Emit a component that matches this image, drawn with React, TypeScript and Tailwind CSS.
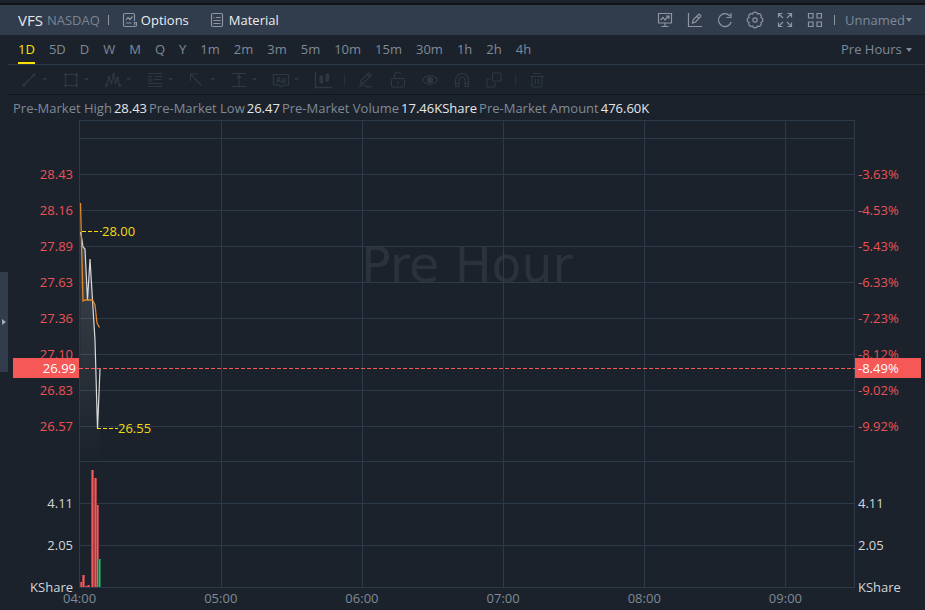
import { useState, type ReactNode } from "react";

const PERIODS = ["1D", "5D", "D", "W", "M", "Q", "Y", "1m", "2m", "3m", "5m", "10m", "15m", "30m", "1h", "2h", "4h"];

const STATS = [
  ["Pre-Market High", "28.43"],
  ["Pre-Market Low", "26.47"],
  ["Pre-Market Volume", "17.46KShare"],
  ["Pre-Market Amount", "476.60K"],
];

const PRICES = ["28.43", "28.16", "27.89", "27.63", "27.36", "27.10", "26.83", "26.57"];
const CHANGES = ["-3.63%", "-4.53%", "-5.43%", "-6.33%", "-7.23%", "-8.12%", "-9.02%", "-9.92%"];
const VOLUMES = ["4.11", "2.05", "KShare"];
const TIMES = ["04:00", "05:00", "06:00", "07:00", "08:00", "09:00"];

const ROWS = [0, 18, 54, 90, 126, 162, 198, 234, 270, 306, 341, 383, 425, 467];
const COLUMNS = [0, 142, 283, 424, 565, 706, 775];

const BARS = [
  { x: 2, top: 462, up: false },
  { x: 4, top: 455, up: false },
  { x: 7, top: 466, up: false },
  { x: 9, top: 465, up: false },
  { x: 13, top: 350, up: false },
  { x: 16, top: 358, up: false },
  { x: 18, top: 385, up: false },
  { x: 20, top: 439, up: true },
];

function Caret({ small = false }: { small?: boolean }) {
  return (
    <svg className={small ? "h-[3px] w-[5px]" : "h-[4px] w-[6px]"} viewBox="0 0 6 4" fill="currentColor" aria-hidden="true">
      <path d="M0 0h6L3 4z" />
    </svg>
  );
}

function Icon({ children }: { children: ReactNode }) {
  return (
    <svg className="size-[18px] shrink-0" viewBox="0 0 18 18" fill="none" stroke="currentColor" strokeWidth="1.2" aria-hidden="true">
      {children}
    </svg>
  );
}

const MENU_TOOLS: { name: string; icon: ReactNode }[] = [
  {
    name: "Line",
    icon: (
      <>
        <path d="M4 14 14 4" />
        <circle cx="4" cy="14" r="1.5" fill="currentColor" stroke="none" />
        <circle cx="14" cy="4" r="1.5" fill="currentColor" stroke="none" />
      </>
    ),
  },
  {
    name: "Shape",
    icon: (
      <>
        <path d="M3.5 3.5h11v11h-11z" />
        <path d="M2 3.5a1.5 1.5 0 1 1 3 0 1.5 1.5 0 0 1-3 0M13 3.5a1.5 1.5 0 1 1 3 0 1.5 1.5 0 0 1-3 0M2 14.5a1.5 1.5 0 1 1 3 0 1.5 1.5 0 0 1-3 0M13 14.5a1.5 1.5 0 1 1 3 0 1.5 1.5 0 0 1-3 0" fill="currentColor" stroke="none" />
      </>
    ),
  },
  {
    name: "Wave",
    icon: (
      <>
        <path d="m2.5 14.5 2.5-8 2.5 6L9.5 3l2 9.5L13.5 7l2.5 7.5" />
        <path d="M1 14.5a1.4 1.4 0 1 1 2.8 0 1.4 1.4 0 0 1-2.8 0M3.6 6.5a1.4 1.4 0 1 1 2.8 0 1.4 1.4 0 0 1-2.8 0M8.1 3.2a1.4 1.4 0 1 1 2.8 0 1.4 1.4 0 0 1-2.8 0M12.1 7a1.4 1.4 0 1 1 2.8 0 1.4 1.4 0 0 1-2.8 0M14.4 14.5a1.4 1.4 0 1 1 2.8 0 1.4 1.4 0 0 1-2.8 0" fill="currentColor" stroke="none" />
      </>
    ),
  },
  {
    name: "Golden section",
    icon: (
      <>
        <path d="M2 2.5h14M8 5.5h8M8 8.5h8M2 12.5h14M2 15.5h14" />
        <path d="M6 5.5H3V10h3V8H4.8" />
      </>
    ),
  },
  {
    name: "Arrow",
    icon: <path d="M13.5 14.5 3 3.5M2.5 10V3H10" />,
  },
  {
    name: "Measure",
    icon: (
      <>
        <path d="M2 2.5h14M2 15.5h14M9 4v11" />
        <path d="m9 3 2.5 4h-5z" fill="currentColor" stroke="none" />
      </>
    ),
  },
  {
    name: "Text note",
    icon: (
      <>
        <path d="M1.5 3.5h15V14H11l-2 2-2-2H1.5z" />
        <text x="9" y="11.5" textAnchor="middle" fontSize="8" fontWeight="700" fill="currentColor" stroke="none">
          Aa
        </text>
      </>
    ),
  },
];

const EDIT_TOOLS: { name: string; icon: ReactNode }[] = [
  {
    name: "Continuous drawing",
    icon: <path d="M4 9.5 11.5 2 14 4.500 6.500 12l-3 1zM10 3.500 12.500 6M2 16c3-2.500 5-2.500 6.500-1s4 1.500 6.500 0" />,
  },
  {
    name: "Lock drawings",
    icon: (
      <>
        <rect x="2.5" y="7.5" width="13" height="8.5" rx="1.5" />
        <path d="M5.5 7.5V5A3.5 3.5 0 0 1 12 3M9 10v3.5" />
      </>
    ),
  },
  {
    name: "Show drawings",
    icon: (
      <>
        <path d="M1.5 9C5 3.2 13 3.2 16.5 9 13 14.8 5 14.8 1.5 9z" />
        <circle cx="9" cy="9" r="2.6" fill="currentColor" />
      </>
    ),
  },
  {
    name: "Magnet",
    icon: <path d="M2.5 15.5V9a6.5 6.5 0 0 1 13 0v6.5H12V9a3 3 0 0 0-6 0v6.5zM2.5 12.5H6M12 12.5h3.5" />,
  },
  {
    name: "Link drawings",
    icon: (
      <>
        <rect x="7.5" y="2" width="8.5" height="8" rx="1" />
        <path d="M5.5 8H3a1 1 0 0 0-1 1v6a1 1 0 0 0 1 1h6a1 1 0 0 0 1-1v-3" />
      </>
    ),
  },
];

const HEADER_ACTIONS: { name: string; icon: ReactNode }[] = [
  {
    name: "Simulated trading",
    icon: <path d="M2.5 2.5h13V12h-13zM9 12v3M5.5 15.5h7M4.5 9 7 6.5 9 9l3.5-4M10 5h3v3" />,
  },
  {
    name: "Draw",
    icon: <path d="M2.5 2v13.5H16M6.5 12l.8-3.5L13 3l2 2-5.5 6zM10.5 5l2 2" />,
  },
  {
    name: "Refresh",
    icon: <path d="M14.2 5.2A6.5 6.5 0 1 0 15.2 11M15 2v4.5h-4.5" />,
  },
  {
    name: "Settings",
    icon: (
      <>
        <path d="M15 6.500a2.600 2.600 0 0 1 0 5 2.600 2.600 0 0 1-3.500 3.500 2.600 2.600 0 0 1-5 0A2.600 2.600 0 0 1 3 11.500a2.600 2.600 0 0 1 0-5A2.600 2.600 0 0 1 6.500 3a2.600 2.600 0 0 1 5 0A2.600 2.600 0 0 1 15 6.500z" />
        <circle cx="9" cy="9" r="2.2" />
      </>
    ),
  },
  {
    name: "Full screen",
    icon: <path d="M2.5 6.5v-4h4M2.5 2.5 7 7M11.5 2.5h4v4M15.5 2.5 11 7M2.5 11.5v4h4M2.5 15.5 7 11M11.5 15.5h4v-4M15.5 15.5 11 11" />,
  },
  {
    name: "Layout",
    icon: <path d="M2.5 2.5H7V7H2.5zM11 2.5h4.5V7H11zM2.5 11H7v4.5H2.5zM11 11h4.5v4.5H11z" />,
  },
];

function Header() {
  return (
    <header className="flex h-[30px] items-center bg-[#313c4c] pr-[13px] pl-[18px]">
      <h1 className="text-[15px] leading-5 text-[#e4e7ea]">VFS</h1>
      <span className="ml-1 text-[13px] leading-5 text-[#7b8695]">NASDAQ</span>
      <span className="mx-2 h-[10px] w-px bg-[#8c96a3]" />
      <button type="button" className="ml-[5px] flex items-center gap-[3px] text-[13px] leading-5 text-[#eceef0]">
        <svg className="size-[16px] text-[#8c96a3]" viewBox="0 0 16 16" fill="none" stroke="currentColor" strokeWidth="1.2" aria-hidden="true">
          <path d="M12.5 9V3A1.5 1.5 0 0 0 11 1.5H3A1.5 1.5 0 0 0 1.5 3v10A1.5 1.5 0 0 0 3 14.5h10a1.5 1.5 0 0 0 1.5-1.5v-2.5h-2V13M4 8l2-2.5 2 2 2.5-3M4 11h5.5" />
        </svg>
        Options
      </button>
      <button type="button" className="ml-5 flex items-center gap-[4px] text-[13px] leading-5 text-[#eceef0]">
        <svg className="size-[16px] text-[#8c96a3]" viewBox="0 0 16 16" fill="none" stroke="currentColor" strokeWidth="1.2" aria-hidden="true">
          <rect x="2.5" y="1.5" width="11" height="13" rx="1.5" />
          <path d="M4.500 5.500h1M7 5.500h4.500M4.500 8.500h7M4.500 11.500h7" />
        </svg>
        Material
      </button>
      <div className="ml-auto flex items-center">
        {HEADER_ACTIONS.map((action) => (
          <button key={action.name} type="button" aria-label={action.name} className="flex w-[30px] justify-center text-[#8c96a3]">
            <Icon>{action.icon}</Icon>
          </button>
        ))}
        <span className="mr-[10px] ml-1 h-[10px] w-px bg-[#8c96a3]" />
        <label className="flex items-center gap-px text-[13px] leading-5 text-[#7f8a98]">
          <select aria-label="Layout name" className="appearance-none bg-transparent outline-none">
            <option>Unnamed</option>
          </select>
          <Caret />
        </label>
      </div>
    </header>
  );
}

function PeriodBar() {
  const [period, setPeriod] = useState("1D");
  return (
    <nav className="flex h-[30px] justify-between border-b border-[#2d3a49] pr-[13px] pl-[10px] text-[13px]">
      <div className="flex gap-[14px]">
        {PERIODS.map((p) => (
          <button
            key={p}
            type="button"
            onClick={() => setPeriod(p)}
            className={
              p === period
                ? "border-b-2 border-[#ffe100] leading-[28px] text-[#ffe100]"
                : "border-b-2 border-transparent leading-[28px] text-[#7f8a98]"
            }
          >
            {p}
          </button>
        ))}
      </div>
      <label className="flex items-center gap-1 pt-px text-[#7f8a98]">
        <select aria-label="Session" className="appearance-none bg-transparent outline-none">
          <option>Pre Hours</option>
        </select>
        <Caret />
      </label>
    </nav>
  );
}

function DrawingBar() {
  return (
    <div role="toolbar" aria-label="Drawing tools" className="flex h-[30px] items-center border-b border-[#11161b] pl-3 text-[#2e3742]">
      {MENU_TOOLS.map((tool) => (
        <button key={tool.name} type="button" aria-label={tool.name} className="flex w-[42px] items-center gap-[4px]">
          <Icon>{tool.icon}</Icon>
          <Caret small />
        </button>
      ))}
      <button type="button" aria-label="Candles">
        <Icon>
          <path d="M1.5 1v15.5H18" strokeWidth="1.5" />
          <path d="M6 5.5h2.5v6H6zM12 3.5h2.5v6H12zM7.2 4v9M13.2 2v9" />
        </Icon>
      </button>
      <span className="mr-[5px] ml-3 h-3 w-px bg-[#252d37]" />
      {EDIT_TOOLS.map((tool) => (
        <button key={tool.name} type="button" aria-label={tool.name} className="flex w-8 justify-center">
          <Icon>{tool.icon}</Icon>
        </button>
      ))}
      <span className="mx-[5px] h-3 w-px bg-[#252d37]" />
      <button type="button" aria-label="Delete drawings" className="flex w-8 justify-center">
        <Icon>
          <path d="M5 2.5h8M2 5.5h14M4 5.5v9A1.5 1.5 0 0 0 5.5 16h7a1.5 1.5 0 0 0 1.5-1.5v-9M7.5 8v5M10.5 8v5" />
        </Icon>
      </button>
    </div>
  );
}

function Plot() {
  return (
    <div className="relative h-[468px] min-w-0 flex-1">
      <p className="absolute inset-x-0 top-[116px] text-center font-['DejaVu_Sans'] text-[49px] leading-[60px] text-[#2b323c]">Pre Hour</p>
      <svg className="relative block h-[468px] w-full" viewBox="0 0 776 468" preserveAspectRatio="none" fill="none" role="img" aria-label="Pre-market price and volume">
        <defs>
          <linearGradient id="area" x1="0" y1="0" x2="0" y2="1">
            <stop offset="0" stopColor="#ffffff" stopOpacity="0.16" />
            <stop offset="1" stopColor="#ffffff" stopOpacity="0" />
          </linearGradient>
        </defs>
        {ROWS.map((y) => (
          <rect key={y} x="0" y={y} width="776" height="1" fill="#2d3a49" />
        ))}
        {COLUMNS.map((x) => (
          <rect key={x} x={x} y="0" width="1" height="468" fill="#2d3a49" />
        ))}
        <path d="M1.5 112 4 127l2 1 2.500 52 2.500-41 2.500 41 2.500 40 2.500 89 2.500-60v92h-20z" fill="url(#area)" />
        <path d="M1.5 112 3 120l1 7 2 2 2.500 51L11 139l2.500 41 2.500 40 2.500 89 2.500-60" stroke="#d9dadb" strokeWidth="1.2" />
        <path d="M1.5 83 4 181l2-1h7.500l2.500 5 2 18 2.500 4.500" stroke="#e08a2e" strokeWidth="1.3" />
        <path d="M0 248.500h776" stroke="#f65757" strokeDasharray="4 2" />
        <path d="M3 111.500h20M18 308.500h21" stroke="#ffe100" strokeDasharray="4 2" />
        {BARS.map((bar) => (
          <g key={bar.x}>
            <rect x={bar.x - 1} y={bar.top} width="3" height={467 - bar.top} fill={bar.up ? "#23774f" : "#a94247"} />
            <rect x={bar.x} y={bar.top} width="1" height={467 - bar.top} fill={bar.up ? "#2fb573" : "#f65757"} />
          </g>
        ))}
      </svg>
      <span className="absolute top-[101px] left-[23px] text-[13px] leading-5 text-[#f0dc14]">28.00</span>
      <span className="absolute top-[298px] left-[39px] text-[13px] leading-5 text-[#f0dc14]">26.55</span>
    </div>
  );
}

function Chart() {
  return (
    <section className="flex h-[468px] text-[13px]">
      <div className="relative w-[71px] pt-9 pr-[6px] text-right">
        {PRICES.map((p) => (
          <div key={p} className="h-9 leading-9 text-[#ea5355]">{p}</div>
        ))}
        <div className="pt-[38px]">
          {VOLUMES.map((v) => (
            <div key={v} className="h-[42px] leading-[42px] text-[#d3d6d9]">{v}</div>
          ))}
        </div>
        <span className="absolute top-[238px] right-0 left-[5px] h-5 bg-[#f65757] pr-[3px] leading-5 text-white">26.99</span>
      </div>
      <Plot />
      <div className="relative w-[70px] pt-9 pl-[3px]">
        {CHANGES.map((c) => (
          <div key={c} className="h-9 leading-9 text-[#ea5355]">{c}</div>
        ))}
        <div className="pt-[38px]">
          {VOLUMES.map((v) => (
            <div key={v} className="h-[42px] leading-[42px] text-[#d3d6d9]">{v}</div>
          ))}
        </div>
        <span className="absolute top-[238px] right-1 left-0 h-5 bg-[#f65757] pl-[3px] leading-5 text-white">-8.49%</span>
      </div>
    </section>
  );
}

export default function App() {
  return (
    <main className="min-h-screen w-full bg-[#1b222b] font-['Open_Sans','Noto_Sans',sans-serif]">
      <div className="h-[5px] border-b-2 border-[#0f1318]" />
      <Header />
      <div className="flex">
        <div className="w-2 shrink-0 pt-[237px]">
          <button type="button" aria-label="Expand side panel" className="flex h-[100px] w-2 items-center justify-center bg-[#313c4c] text-[#a3abb5]">
            <svg className="h-[6px] w-[4px]" viewBox="0 0 4 6" fill="currentColor" aria-hidden="true">
              <path d="M0 0 4 3 0 6z" />
            </svg>
          </button>
        </div>
        <div className="min-w-0 flex-1">
          <PeriodBar />
          <DrawingBar />
          <dl className="flex h-[25px] items-center gap-0.5 pl-[5px] text-[13px] leading-5">
            {STATS.map(([label, value]) => (
              <div key={label} className="flex gap-0.5">
                <dt className="text-[#7f8a98]">{label}</dt>
                <dd className="text-[#e4e7ea]">{value}</dd>
              </div>
            ))}
          </dl>
          <Chart />
          <div className="flex pr-[69px] pl-px text-[13px] leading-5 text-[#7f8a98]">
            {TIMES.map((t) => (
              <span key={t} className="flex-1 text-center">{t}</span>
            ))}
          </div>
        </div>
      </div>
    </main>
  );
}
